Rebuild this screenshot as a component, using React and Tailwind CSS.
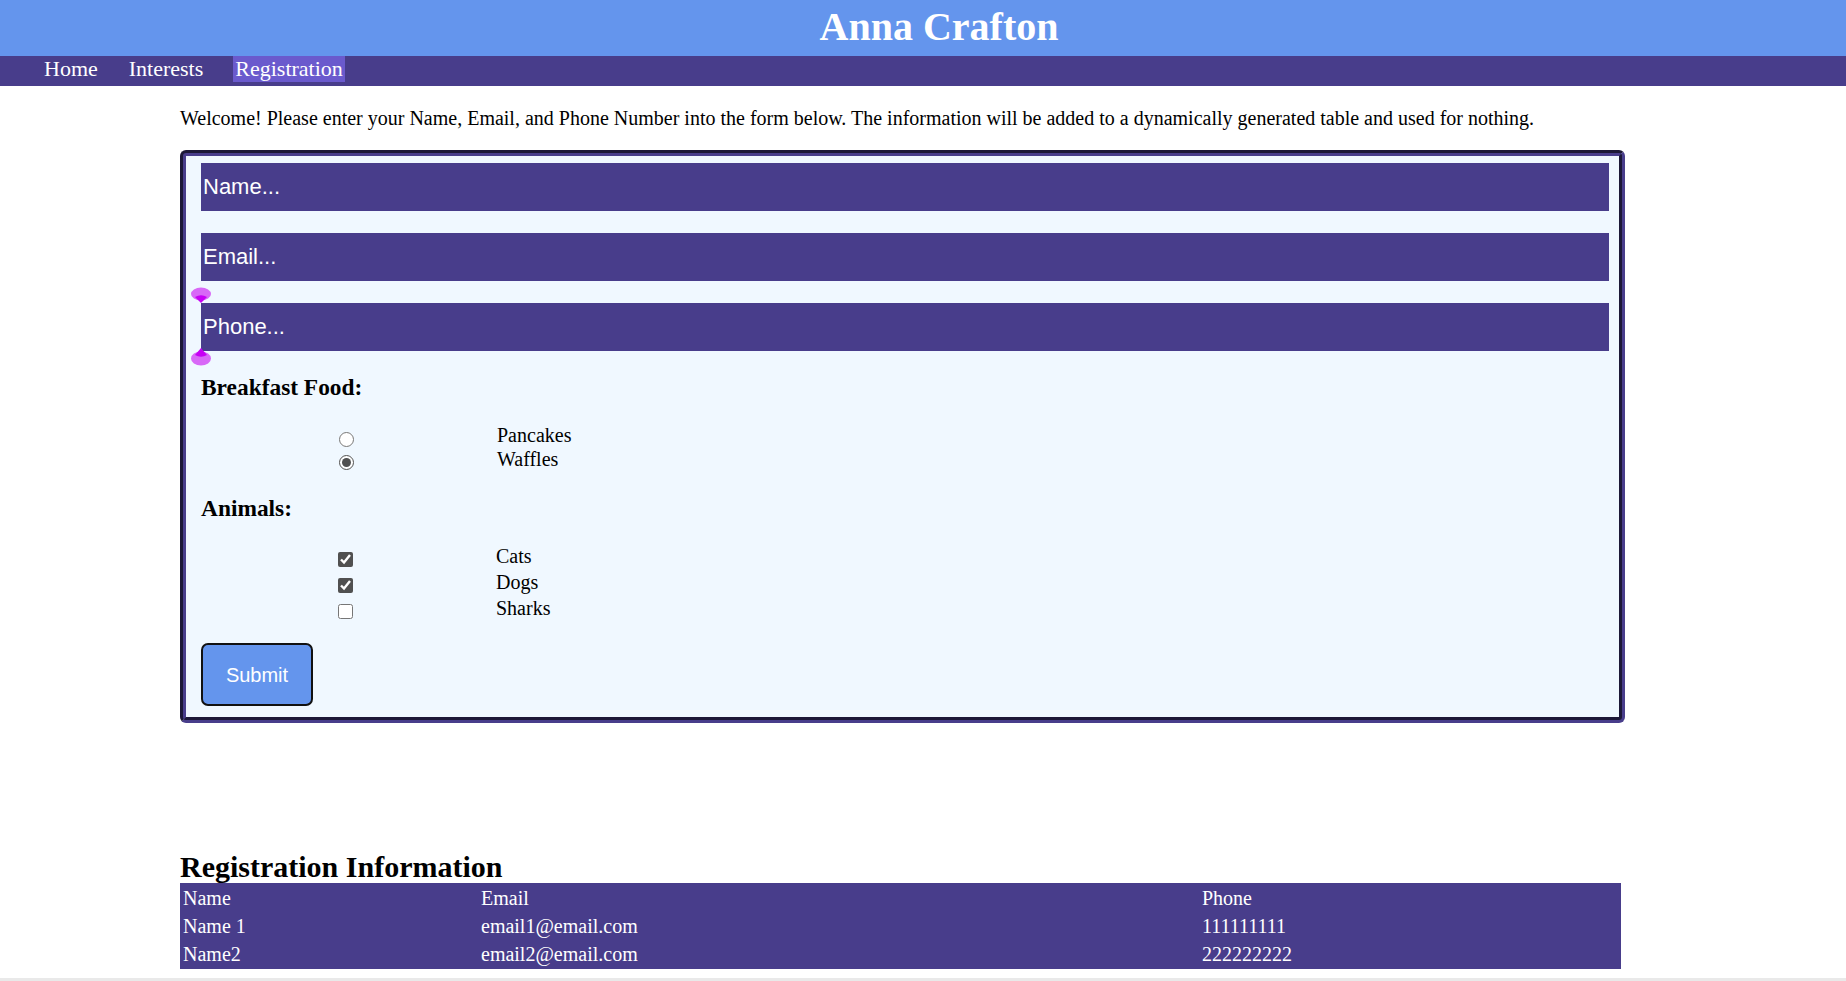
import React from "react";

function TopHandle() {
  return (
    <svg width="20" height="17" viewBox="0 0 20 17" className="absolute left-[5px] top-[131px]">
      <ellipse cx="10" cy="7" rx="10" ry="6.5" fill="#d868f7" />
      <path d="M4 10 Q10 6.5 16 10 L10 16 Z" fill="#c700f5" />
    </svg>
  );
}

function BottomHandle() {
  return (
    <svg width="20" height="19" viewBox="0 0 20 19" className="absolute left-[5px] top-[191px]">
      <ellipse cx="10" cy="11.5" rx="10" ry="7" fill="#d868f7" />
      <path d="M4 8 Q10 11.5 16 8 L10 1 Z" fill="#c700f5" />
    </svg>
  );
}

export default function App() {
  const inputCls =
    "block ml-[15px] w-[1408px] h-[48px] bg-[#483D8B] text-white placeholder:text-white pl-[2px] text-[22px] outline-none font-['Liberation_Sans',Arial,sans-serif]";
  return (
    <div className="min-h-[981px] bg-white text-black text-[20px] font-['Liberation_Serif','Times_New_Roman',serif]">
      <header className="h-[56px] bg-[#6495ED] pt-[3px] pl-[32px] text-center">
        <h1 className="text-[40px] font-bold leading-[normal] text-white">Anna Crafton</h1>
      </header>
      <nav className="h-[30px] bg-[#483D8B] flex items-start pl-[42px] gap-[27px] text-[22px] text-white leading-[normal]">
        <span className="px-[2px]">Home</span>
        <span className="px-[2px]">Interests</span>
        <span className="px-[2px] ml-[1px] bg-[#6A5ACD]">Registration</span>
      </nav>

      <main className="ml-[180px] w-[1445px]">
        <p className="mt-[21px] mb-[20px] leading-[23px] whitespace-nowrap">
          Welcome! Please enter your Name, Email, and Phone Number into the form below. The information will be added to a dynamically generated table and used for nothing.
        </p>

        <form
          className="relative w-[1445px] border-[6px] [border-style:groove] border-[#483D8B] rounded-[6px] bg-[#F0F8FF] pt-[7px] pb-[11px]"
          onSubmit={(e) => e.preventDefault()}
        >
          <input className={inputCls} placeholder="Name..." />
          <input className={inputCls + " mt-[22px]"} placeholder="Email..." />
          <input className={inputCls + " mt-[22px]"} placeholder="Phone..." />
          <TopHandle />
          <BottomHandle />

          <h3 className="ml-[15px] mt-[23px] text-[23.4px] font-bold leading-[26px]">Breakfast Food:</h3>
          <div className="mt-[23px]">
            <div className="flex items-start h-[24px]">
              <input type="radio" name="food" className="ml-[153px] mt-[9px] w-[15px] h-[15px] accent-[#505050]" />
              <span className="ml-[143px] leading-[24px]">Pancakes</span>
            </div>
            <div className="flex items-start h-[24px]">
              <input type="radio" name="food" defaultChecked className="ml-[153px] mt-[8px] w-[15px] h-[15px] accent-[#505050]" />
              <span className="ml-[143px] leading-[24px]">Waffles</span>
            </div>
          </div>

          <h3 className="ml-[15px] mt-[24px] text-[23.4px] font-bold leading-[26px]">Animals:</h3>
          <div className="mt-[23px]">
            {[
              ["Cats", true],
              ["Dogs", true],
              ["Sharks", false],
            ].map(([label, checked]) => (
              <div key={label} className="flex items-start h-[26px]">
                <input type="checkbox" defaultChecked={checked} className="ml-[152px] mt-[8px] w-[15px] h-[15px] accent-[#505050]" />
                <span className="ml-[143px] leading-[24px]">{label}</span>
              </div>
            ))}
          </div>

          <button
            type="submit"
            className="block ml-[15px] mt-[21px] w-[112px] h-[63px] rounded-[7px] border-2 border-[#111] bg-[#6495ED] text-white text-[20px] font-['Liberation_Sans',Arial,sans-serif]"
          >
            Submit
          </button>
        </form>

        <h2 className="mt-[127px] text-[30px] font-bold leading-[33px]">Registration Information</h2>
        <div className="w-[1441px] bg-[#483D8B] text-white p-[2px] grid grid-cols-[296px_719px_418px] gap-[2px]">
          {[
            ["Name", "Email", "Phone"],
            ["Name 1", "email1@email.com", "111111111"],
            ["Name2", "email2@email.com", "222222222"],
          ].map((row, i) =>
            row.map((c, j) => (
              <div key={i + "-" + j} className="px-[1px] py-[1px] leading-[24px]">
                {c}
              </div>
            ))
          )}
        </div>
      </main>
      <div className="mt-[9px] h-[4px] bg-[#e9e9e9]" />
    </div>
  );
}
